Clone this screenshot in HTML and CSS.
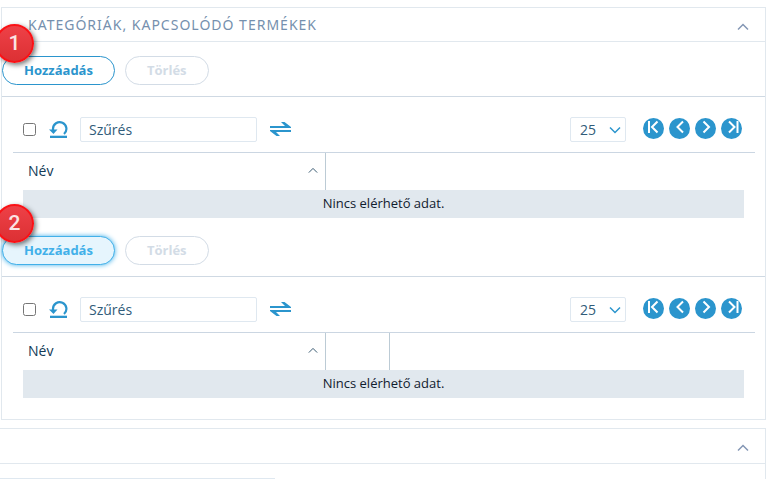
FILE: index.html
```html
<!DOCTYPE html>
<html lang="hu">
<head>
<meta charset="utf-8">
<title>Kategóriák, kapcsolódó termékek</title>
<link rel="stylesheet" href="styles.css">
</head>
<body>
<svg class="sprite">
  <symbol id="up" viewBox="0 0 12 8"><path d="M1 6.5 6 1.5l5 5"/></symbol>
  <symbol id="down" viewBox="0 0 12 8"><path d="M1 1.5l5 5 5-5"/></symbol>
  <symbol id="reset" viewBox="0 0 20 20"><path d="M4 10.500V9a6.700 6.700 0 1 1 11 5" fill="none" stroke="currentColor" stroke-width="2.2"/><path d="M0 9.500h8.500L4.500 14z" fill="currentColor"/><path d="M1 15.700h17V18H1z" fill="currentColor"/></symbol>
  <symbol id="swap" viewBox="0 0 22 16"><path d="M0 5h15L11 1h3.500l6.500 5v1H0zM21 9H0v1l6.500 5H10L6 11h15z" fill="currentColor"/></symbol>
  <symbol id="first" viewBox="0 0 21 21"><path d="M6 3v12M14.500 3.500 9 9l5.500 5.500"/></symbol>
  <symbol id="prev" viewBox="0 0 21 21"><path d="M14 3.500 8.500 9l5.500 5.500"/></symbol>
  <symbol id="next" viewBox="0 0 21 21"><path d="M8.500 3.500 14 9l-5.500 5.500"/></symbol>
  <symbol id="last" viewBox="0 0 21 21"><path d="M16.500 3v12M8 3.500 13.500 9 8 14.500"/></symbol>
</svg>

<section class="panel">
  <header class="panel-head">
    <h2>KATEGÓRIÁK, KAPCSOLÓDÓ TERMÉKEK</h2>
    <button class="toggle" type="button" aria-label="Összecsukás"><svg><use href="#up"/></svg></button>
  </header>

  <div class="toolbar">
    <div class="step"><button class="btn" type="button">Hozzáadás</button><span class="badge">1</span></div>
    <button class="btn" type="button" disabled>Törlés</button>
  </div>
  <div class="filter">
    <input class="check" type="checkbox" aria-label="Összes kijelölése">
    <button class="icon reset" type="button" aria-label="Visszaállítás"><svg><use href="#reset"/></svg></button>
    <input class="search" type="text" placeholder="Szűrés" aria-label="Szűrés">
    <button class="icon swap" type="button" aria-label="Csere"><svg><use href="#swap"/></svg></button>
    <div class="size"><select aria-label="Sorok száma"><option>25</option></select><svg><use href="#down"/></svg></div>
    <nav class="pager">
      <button type="button" aria-label="Első"><svg><use href="#first"/></svg></button>
      <button type="button" aria-label="Előző"><svg><use href="#prev"/></svg></button>
      <button type="button" aria-label="Következő"><svg><use href="#next"/></svg></button>
      <button type="button" aria-label="Utolsó"><svg><use href="#last"/></svg></button>
    </nav>
  </div>
  <div class="grid">
    <table>
      <thead><tr><th class="name"><div class="sort">Név<svg><use href="#up"/></svg></div></th><th></th></tr></thead>
      <tbody><tr><td colspan="2">Nincs elérhető adat.</td></tr></tbody>
    </table>
  </div>

  <div class="toolbar next">
    <div class="step"><button class="btn active" type="button">Hozzáadás</button><span class="badge">2</span></div>
    <button class="btn" type="button" disabled>Törlés</button>
  </div>
  <div class="filter">
    <input class="check" type="checkbox" aria-label="Összes kijelölése">
    <button class="icon reset" type="button" aria-label="Visszaállítás"><svg><use href="#reset"/></svg></button>
    <input class="search" type="text" placeholder="Szűrés" aria-label="Szűrés">
    <button class="icon swap" type="button" aria-label="Csere"><svg><use href="#swap"/></svg></button>
    <div class="size"><select aria-label="Sorok száma"><option>25</option></select><svg><use href="#down"/></svg></div>
    <nav class="pager">
      <button type="button" aria-label="Első"><svg><use href="#first"/></svg></button>
      <button type="button" aria-label="Előző"><svg><use href="#prev"/></svg></button>
      <button type="button" aria-label="Következő"><svg><use href="#next"/></svg></button>
      <button type="button" aria-label="Utolsó"><svg><use href="#last"/></svg></button>
    </nav>
  </div>
  <div class="grid">
    <table>
      <thead><tr><th class="name"><div class="sort">Név<svg><use href="#up"/></svg></div></th><th class="narrow"></th><th></th></tr></thead>
      <tbody><tr><td colspan="3">Nincs elérhető adat.</td></tr></tbody>
    </table>
  </div>
</section>

<section class="panel following">
  <header class="panel-head">
    <button class="toggle" type="button" aria-label="Összecsukás"><svg><use href="#up"/></svg></button>
  </header>
  <div class="panel-body"><div class="field"></div></div>
</section>
</body>
</html>
```
FILE: styles.css
```css
* { box-sizing: border-box; }
body {
  margin: 0;
  padding: 7px 10px 0 1px;
  background: #fff;
  color: #123a56;
  font: 14px/20px "Open Sans", "Noto Sans", sans-serif;
}
button, input, select { font: inherit; margin: 0; padding: 0; }
button { border: 0; background: none; }
svg { display: block; fill: none; stroke: currentColor; }
.sprite { display: none; }

.panel { border: 1px solid #e1e8ee; padding-bottom: 21px; }
.following { margin: 8px 0 0 -2px; padding-bottom: 0; border-bottom: 0; }
.panel-head {
  display: flex;
  align-items: center;
  height: 34px;
  padding: 0 16px 0 26px;
  border-bottom: 1px solid #e1e8ee;
}
.following .panel-head { height: 35px; }
h2 {
  margin: 0;
  color: #7590ae;
  font: 14px/20px "Noto Sans", "Open Sans", sans-serif;
  letter-spacing: 1px;
}
.toggle { margin-left: auto; padding-top: 4px; color: #8497b5; }
.toggle svg { width: 12px; height: 8px; stroke-width: 1.5; }

.toolbar {
  display: flex;
  gap: 10px;
  padding: 14px 0 11px;
  border-bottom: 1px solid #cfd9e3;
}
.toolbar.next { padding-top: 18px; }
.step { position: relative; }
.btn {
  display: block;
  height: 29px;
  padding: 0 21px 2px;
  border: 1px solid #2b95cd;
  border-radius: 15px;
  background: #fff;
  color: #2b95cd;
  font-weight: 700;
  font-size: 13px;
}
.btn.active {
  border-color: #41b0e9;
  background: #e6f5fd;
  color: #41b0e9;
  box-shadow: 0 0 5px #41b0e9;
}
.btn:disabled { border-color: #d3dce6; color: #d3dce6; }
.badge {
  position: absolute;
  left: -7px;
  top: -32px;
  width: 39px;
  height: 39px;
  border: 2px solid #fa1115;
  border-radius: 50%;
  background: linear-gradient(#ee4147, #dc3034);
  box-shadow: 2px 2px 5px #0008;
  color: #fbe3e3;
  font: 500 21px/35px Roboto, "Liberation Sans", sans-serif;
  text-align: center;
}

.filter {
  display: flex;
  align-items: center;
  margin: 0 10px 0 11px;
  padding: 20px 13px 10px 10px;
  border-bottom: 1px solid #cbd6e2;
}
.check { width: 13px; height: 13px; }
.icon { color: #2b95cd; }
.icon svg { stroke: none; }
.reset { margin: 0 11px 0 13px; }
.reset svg { width: 20px; height: 20px; }
.search {
  width: 177px;
  height: 25px;
  padding: 0 8px;
  border: 1px solid #dfe8f0;
  border-radius: 2px;
  color: #315c79;
}
.search::placeholder { color: #315c79; opacity: 1; }
.swap { margin-left: 13px; padding-bottom: 2px; }
.swap svg { width: 22px; height: 16px; }
.size { position: relative; margin-left: auto; }
.size select {
  display: block;
  appearance: none;
  width: 56px;
  height: 25px;
  padding: 0 9px;
  border: 1px solid #dfe8f0;
  border-radius: 2px;
  background: #fff;
  color: #315c79;
}
.size svg {
  position: absolute;
  right: 5px;
  top: 9px;
  width: 12px;
  height: 8px;
  color: #2b95cd;
  stroke-width: 1.5;
  pointer-events: none;
}
.pager { display: flex; gap: 5px; margin-left: 17px; margin-bottom: 2px; }
.pager button {
  width: 21px;
  height: 21px;
  border-radius: 50%;
  background: #2b95cd;
  color: #fff;
}
.pager svg { width: 21px; height: 21px; stroke-width: 2; }

.grid { padding: 0 21px; }
table { width: 100%; table-layout: fixed; border-collapse: separate; border-spacing: 0; }
th { height: 37px; padding: 0; font-weight: 400; text-align: left; }
th + th:not(:last-child), .name { border-right: 1px solid #bccbd5; }
.name { width: 303px; padding: 0 7px 2px 5px; }
.narrow { width: 64px; }
.sort { display: flex; align-items: center; justify-content: space-between; }
.sort svg { width: 10px; height: 7px; }
td {
  height: 28px;
  padding: 0 0 2px;
  background: #e1e8ee;
  color: #10202e;
  font-size: 13px;
  text-align: center;
}

.panel-body { padding-top: 14px; }
.field { width: 36%; border-top: 1px solid #dfe8f0; }
```
